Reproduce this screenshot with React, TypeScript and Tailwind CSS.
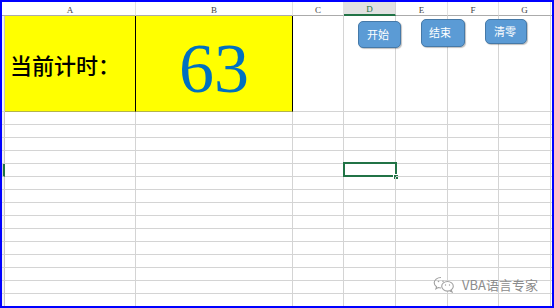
import React from "react";

const COLS = [
  { key: "A", w: "w-[131px]" },
  { key: "B", w: "w-[157px]" },
  { key: "C", w: "w-[51px]" },
  { key: "D", w: "w-[52px]" },
  { key: "E", w: "w-[52px]" },
  { key: "F", w: "w-[51px]" },
  { key: "G", w: "w-[52px]" },
];

const serif = { fontFamily: '"Liberation Serif", "Times New Roman", serif' };
const cjk = { fontFamily: '"Noto Sans CJK SC", "Noto Sans", sans-serif' };

function Header() {
  return (
    <div className="flex h-[14px] shrink-0">
      <div className="w-[3px] shrink-0 border-b border-[#ababab] bg-white" />
      {COLS.map((c) =>
        c.key === "D" ? (
          <div
            key={c.key}
            className={`${c.w} shrink-0 flex items-end justify-center border-r border-r-[#d4d4d4] border-b-2 border-b-[#217346] bg-[#e1e1e1] text-[9px] leading-[9px] text-[#217346]`}
            style={serif}
          >
            <span className="pb-[0px]">{c.key}</span>
          </div>
        ) : (
          <div
            key={c.key}
            className={`${c.w} shrink-0 flex items-end justify-center border-r border-r-[#e1e1e1] border-b border-b-[#ababab] bg-white text-[9px] leading-[10px] text-[#444]`}
            style={serif}
          >
            <span>{c.key}</span>
          </div>
        )
      )}
      <div className="flex-1 border-b border-[#ababab]" />
    </div>
  );
}

function TopRow() {
  return (
    <div className="flex h-[96px] shrink-0">
      <div className="w-[3px] shrink-0 border-r border-[#c6c6c6] border-b border-b-[#d4d4d4] bg-[#f3f3f3]" />
      <div
        className="w-[131px] shrink-0 flex items-center bg-[#ffff00] border-r border-r-black border-b border-b-[#b3b34d] pl-[5px] text-[22px] leading-[22px] font-medium text-black"
        style={cjk}
      >
        当前计时：
      </div>
      <div
        className="w-[157px] shrink-0 flex items-end justify-center bg-[#ffff00] border-r border-r-black border-b border-b-[#b3b34d] pb-[7px] text-[70px] leading-[70px] text-[#0070c0]"
        style={serif}
      >
        63
      </div>
      {COLS.slice(2).map((c) => (
        <div key={c.key} className={`${c.w} shrink-0 border-r border-b border-[#d4d4d4]`} />
      ))}
      <div className="flex-1 border-b border-[#d4d4d4]" />
    </div>
  );
}

function Row({ selected }: { selected: boolean }) {
  return (
    <div className="flex h-[13px] shrink-0">
      {selected ? (
        <div className="w-[3px] shrink-0 border-r-2 border-[#217346] border-b border-b-[#d4d4d4] bg-[#d2d2d2]" />
      ) : (
        <div className="w-[3px] shrink-0 border-r border-[#c6c6c6] border-b border-b-[#d4d4d4] bg-[#f3f3f3]" />
      )}
      {COLS.map((c) => (
        <div key={c.key} className={`${c.w} shrink-0 relative border-r border-b border-[#d4d4d4]`}>
          {selected && c.key === "D" && (
            <>
              <div className="absolute left-[-1px] top-[-2px] w-[54px] h-[15px] border-2 border-[#217346]" />
              <div className="absolute left-[49px] top-[10px] w-[4px] h-[4px] bg-[#217346] border border-white box-content" />
            </>
          )}
        </div>
      ))}
      <div className="flex-1 border-b border-[#d4d4d4]" />
    </div>
  );
}

function Btn({ label, cls }: { label: string; cls: string }) {
  return (
    <div
      className={`absolute ${cls} rounded-[5px] border border-[#4579a8] bg-[#5b9bd5] shadow-[1px_1px_1px_rgba(0,0,0,0.25)] text-white text-[11px] leading-[13px]`}
      style={cjk}
    >
      {label}
    </div>
  );
}

function WeChat() {
  return (
    <svg width="22" height="17" viewBox="0 0 22 17" fill="none" stroke="#a0a0a0" strokeWidth="1.1">
      <path d="M8 1.5c-3.9 0-6.8 2.4-6.8 5.3 0 1.6 0.9 3 2.3 4l-0.6 2 2.3-1.2c0.9 0.3 1.8 0.4 2.8 0.4" />
      <ellipse cx="14.5" cy="10.3" rx="5.8" ry="4.8" fill="white" />
      <path d="M18.2 14l0.9 2-2.2-1.1" />
      <circle cx="5.5" cy="5.5" r="0.8" fill="#a0a0a0" stroke="none" />
      <circle cx="10" cy="5.3" r="0.8" fill="#a0a0a0" stroke="none" />
      <circle cx="12.5" cy="9" r="0.7" fill="#a0a0a0" stroke="none" />
      <circle cx="16.5" cy="9" r="0.7" fill="#a0a0a0" stroke="none" />
    </svg>
  );
}

export default function App() {
  const rows = Array.from({ length: 15 }, (_, i) => i);
  return (
    <div className="relative w-[554px] h-[308px] border-2 border-[#0000ff] bg-white overflow-hidden">
      <div className="flex flex-col h-full">
        <Header />
        <TopRow />
        {rows.map((i) => (
          <Row key={i} selected={i === 4} />
        ))}
      </div>

      <Btn label="开始" cls="left-[356px] top-[19px] w-[43px] h-[27px] pl-[8px] pt-[6px]" />
      <Btn label="结束" cls="left-[419px] top-[17px] w-[44px] h-[28px] pl-[7px] pt-[6px]" />
      <Btn label="清零" cls="left-[483px] top-[17px] w-[42px] h-[25px] pl-[8px] pt-[5px]" />

      <div className="absolute left-[431px] top-[274px] flex items-center gap-[7px]">
        <WeChat />
        <span className="text-[13px] leading-[16px] text-[#8c8c8c]" style={cjk}>
          VBA语言专家
        </span>
      </div>
    </div>
  );
}
